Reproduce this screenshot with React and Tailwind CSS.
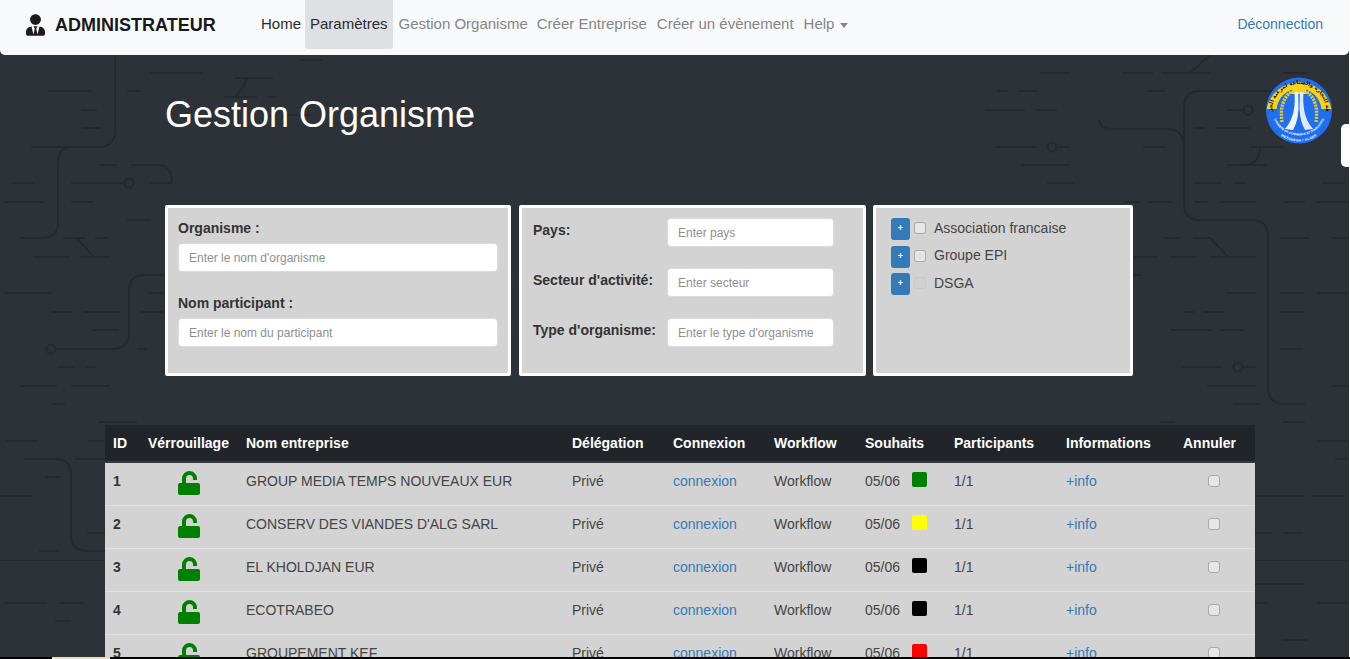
import { FaUserTie } from 'react-icons/fa'

const font = { fontFamily: '"Liberation Sans", Arial, sans-serif' }

// background circuit pattern: [x1, x2, y]
const traces = [
  [300, 323, 60], [150, 203, 73], [235, 273, 78], [48, 90, 91], [127, 140, 91], [224, 257, 97], [268, 276, 97],
  [81, 97, 110], [287, 310, 115], [82, 100, 128], [100, 117, 165], [131, 160, 165], [12, 34, 183], [71, 125, 183],
  [150, 172, 183], [5, 42, 202], [71, 93, 202], [127, 151, 220], [63, 85, 238], [95, 107, 238], [33, 69, 257],
  [80, 110, 257], [6, 50, 293], [150, 165, 293], [51, 72, 312], [83, 119, 312], [141, 165, 312], [93, 119, 330],
  [137, 147, 349], [57, 74, 367], [86, 96, 367], [21, 57, 386], [71, 110, 386], [52, 65, 404], [98, 137, 422],
  [6, 38, 441], [75, 105, 459], [45, 60, 477], [0, 32, 496], [87, 105, 533], [39, 59, 551], [6, 47, 603], [60, 82, 603],
  [55, 71, 621],
  [1040, 1070, 73], [1123, 1153, 73], [997, 1008, 91], [1018, 1038, 91], [1148, 1165, 91], [985, 1025, 110],
  [1036, 1057, 110], [996, 1036, 147], [1058, 1070, 147], [1143, 1166, 147], [1021, 1070, 165], [1047, 1074, 183],
  [1124, 1138, 202], [1149, 1172, 202],
  [1130, 1153, 73], [1161, 1210, 73], [1283, 1307, 73], [1227, 1245, 110], [1194, 1204, 128], [1217, 1250, 128],
  [1250, 1282, 147], [1227, 1267, 165], [1194, 1221, 183], [1234, 1246, 183], [1323, 1345, 183], [1194, 1208, 202],
  [1220, 1256, 202], [1286, 1305, 202], [1318, 1349, 202], [1164, 1180, 238], [1193, 1211, 238], [1280, 1309, 238],
  [1332, 1349, 238], [1133, 1157, 257], [1170, 1196, 257], [1210, 1256, 257], [1130, 1142, 275], [1226, 1256, 293],
  [1280, 1304, 293], [1317, 1349, 293], [1184, 1194, 312], [1203, 1224, 312], [1280, 1304, 312], [1170, 1211, 330],
  [1222, 1243, 330], [1280, 1303, 349], [1182, 1222, 367], [1243, 1256, 367], [1207, 1256, 386], [1332, 1349, 386],
  [1233, 1260, 404], [1160, 1175, 422], [1283, 1305, 422], [1317, 1349, 441], [1335, 1349, 459], [1255, 1304, 496],
  [1311, 1343, 496], [1255, 1272, 533], [1284, 1303, 533], [1255, 1305, 584], [1255, 1266, 603], [1317, 1349, 603],
  [1282, 1307, 640],
]

const curves = [
  'M115 55 V130 Q115 147 98 147 H31',
  'M72 147 Q58 147 58 163 V222 Q58 238 42 238 H21',
  'M160 165 Q172 167 172 183',
  'M247 78 Q243 90 235 97',
  'M76 238 L94 257',
  'M165 275 H145 Q129 275 129 291 V333 Q129 349 112 349 H56',
  'M88 441 H100 Q108 441 115 432',
  'M24 459 H55 Q71 459 71 475 V535 Q71 551 87 551 H105',
  'M1275 91 H1200 Q1184 91 1184 107 V204 Q1184 220 1200 220 H1252 Q1268 220 1268 236 V388 Q1268 404 1285 404 H1305',
  'M1099 120 Q1101 129 1110 129 H1170 Q1183 131 1184 145',
  'M1190 73 L1210 55',
  'M1260 147 Q1260 165 1243 165',
  'M1210 238 L1228 257',
]

const circles = [[129, 183], [51, 349], [1052, 147], [1248, 110], [1238, 367]]

const rows = [
  { id: 1, name: 'GROUP MEDIA TEMPS NOUVEAUX EUR', color: 'bg-[#008000]' },
  { id: 2, name: "CONSERV DES VIANDES D'ALG SARL", color: 'bg-[#ffff00]' },
  { id: 3, name: 'EL KHOLDJAN EUR', color: 'bg-black' },
  { id: 4, name: 'ECOTRABEO', color: 'bg-black' },
  { id: 5, name: 'GROUPEMENT KEF', color: 'bg-[#ff0000]' },
]

const organismes = [
  { name: 'Association francaise', disabled: false, row: 'mb-[6px]', text: 'leading-[20px]' },
  { name: 'Groupe EPI', disabled: false, row: 'mb-[5px]', text: 'leading-[18px]' },
  { name: 'DSGA', disabled: true, row: '', text: 'leading-[20px]' },
]

function Pattern() {
  return (
    <svg className="absolute left-0 top-0" width="1349" height="659" fill="none" stroke="#25292e" strokeWidth="2">
      {traces.map(([a, b, y], i) => (
        <line key={i} x1={a} x2={b} y1={y} y2={y} />
      ))}
      {curves.map((d) => (
        <path key={d} d={d} />
      ))}
      {circles.map(([x, y]) => (
        <circle key={x} cx={x} cy={y} r="4.5" />
      ))}
      <line x1="0" x2="1349" y1="560.5" y2="560.5" strokeWidth="1" />
    </svg>
  )
}

function Logo() {
  return (
    <svg className="absolute left-[1266px] top-[77px]" width="66" height="67" viewBox="0 0 66 67">
      <defs>
        <path id="ring-top" d="M6 34 A27 27 0 0 1 60 34" />
        <path id="ring-inner" d="M5.5 31 A27.5 27.5 0 0 0 60.5 31" />
        <path id="ring-outer" d="M1.5 33 A31.5 31.5 0 0 0 64.5 33" />
      </defs>
      <circle cx="33" cy="33.5" r="33" fill="#1f6ff0" />
      <path d="M0.6 32 A33 33 0 0 1 65.4 32 Z" fill="#fbd116" />
      <circle cx="33" cy="34" r="22.5" fill="#1f6ff0" />
      <path d="M26 11 H29 V10 H37 V11 H40 V14 L44 17 H22 L26 14 Z" fill="#fbd116" />
      <text fontSize="5.4" fontWeight="700" fill="#111" style={{ fontFamily: '"DejaVu Sans", sans-serif' }}>
        <textPath href="#ring-top" startOffset="50%" textAnchor="middle">غرفة التجارة والصناعة لمزغنة الجزائر</textPath>
      </text>
      <path d="M25 15 Q13 24 16 45" fill="none" stroke="#e6cb2e" strokeWidth="3.4" strokeDasharray="2 1.1" />
      <path d="M41 15 Q53 24 50 45" fill="none" stroke="#e6cb2e" strokeWidth="3.4" strokeDasharray="2 1.1" />
      <path d="M28.5 15 C29.5 28 28 42 19 52 L27 53 C30.5 47 32 40 32.5 32 L32.2 15 Z" fill="#eef4fb" />
      <path d="M37.5 15 C36.5 28 38 42 47 52 L39 53 C35.5 47 34 40 33.5 32 L33.8 15 Z" fill="#dfe9f7" />
      <text fontSize="3" fontWeight="700" fill="#fff" style={font}>
        <textPath href="#ring-inner" startOffset="50%" textAnchor="middle">CHAMBRE DE COMMERCE ET D'INDUSTRIE</textPath>
      </text>
      <text fontSize="3.4" fontWeight="700" fill="#fff" letterSpacing="0.3" style={font}>
        <textPath href="#ring-outer" startOffset="50%" textAnchor="middle">MEZGHENA / ALGER</textPath>
      </text>
    </svg>
  )
}

function NavLink({ children, active, muted, className }) {
  return (
    <a
      className={`flex h-[49px] items-center rounded-b-[3px] px-[5px] text-[15px] ${muted ? 'text-[#858688]' : 'text-[#292b2e]'} ${active ? 'bg-[#dfe0e2]' : ''} ${className || ''}`}
    >
      {children}
    </a>
  )
}

function Navbar() {
  return (
    <nav className="relative flex h-[55px] items-start rounded-b-[5px] bg-[#f8f9fa]">
      <div className="ml-[26px] flex h-[50px] w-[189px] items-center gap-[10px]">
        <FaUserTie className="h-[22px] w-[19px] shrink-0 text-[#1d1a1a]" />
        <span className="whitespace-nowrap text-[18px] font-bold text-[#16181b]">ADMINISTRATEUR</span>
      </div>
      <div className="ml-[41px] flex">
        <NavLink className="w-[49px]">Home</NavLink>
        <NavLink active>Paramètres</NavLink>
        <NavLink muted className="ml-px">Gestion Organisme</NavLink>
        <NavLink muted className="-ml-px">Créer Entreprise</NavLink>
        <NavLink muted>Créer un évènement</NavLink>
        <NavLink muted>
          Help
          <span className="ml-[6px] mt-[1px] border-x-[4px] border-t-[5px] border-x-transparent border-t-[#858688]" />
        </NavLink>
      </div>
      <a className="ml-auto mr-[26px] flex h-[49px] items-center text-[14px] text-[#337ab7]">Déconnection</a>
    </nav>
  )
}

function Field({ placeholder, className }) {
  return (
    <input
      placeholder={placeholder}
      className={`h-[29px] rounded-[4px] border border-[#dcdcdc] bg-white px-[10px] text-[12px] text-[#333] outline-none placeholder:text-[#8f8f8f] ${className}`}
    />
  )
}

function InlineField({ label, placeholder }) {
  return (
    <div className="flex h-[29px] items-start">
      <label className="w-[134px] pt-[3px] text-[14px] font-bold leading-[18px] text-[#333]">{label}</label>
      <Field placeholder={placeholder} className="w-[167px]" />
    </div>
  )
}

function Checkbox({ disabled, className }) {
  return (
    <input
      type="checkbox"
      disabled={disabled}
      className={`block h-3 w-3 appearance-none rounded-[3px] border ${disabled ? 'border-[#c8c8c8] bg-[#d0d0d0]' : 'border-[#a9a9a9] bg-[#e6e6e6]'} ${className || ''}`}
    />
  )
}

function Filters() {
  return (
    <section className="ml-[165px] mt-[70px] flex h-[171px]">
      <div className="w-[346px] rounded-[2px] border-[3px] border-white bg-[#d3d3d3] px-[10px] pt-[11px]">
        <label className="block text-[14px] font-bold leading-[18px] text-[#333]">Organisme :</label>
        <Field placeholder="Enter le nom d'organisme" className="mt-[6px] block w-[320px]" />
        <label className="mt-[22px] block text-[14px] font-bold leading-[18px] text-[#333]">Nom participant :</label>
        <Field placeholder="Enter le nom du participant" className="mt-[6px] block w-[320px]" />
      </div>
      <div className="ml-[8px] flex w-[347px] flex-col gap-[21px] rounded-[2px] border-[3px] border-white bg-[#d3d3d3] pl-[11px] pt-[10px]">
        <InlineField label="Pays:" placeholder="Enter pays" />
        <InlineField label="Secteur d'activité:" placeholder="Enter secteur" />
        <InlineField label="Type d'organisme:" placeholder="Enter le type d'organisme" />
      </div>
      <div className="ml-[7px] w-[260px] rounded-[2px] border-[3px] border-white bg-[#d3d3d3] pl-[15px] pt-[10px]">
        {organismes.map((o) => (
          <div key={o.name} className={`flex h-[22px] items-start ${o.row}`}>
            <button className="flex h-[22px] w-[19px] items-center justify-center rounded-[3px] bg-[#337ab7] pb-[1px] text-[9px] font-bold text-white">+</button>
            <Checkbox disabled={o.disabled} className="ml-[4px] mt-[4px]" />
            <span className={`ml-[8px] text-[14px] text-[#444] ${o.text}`}>{o.name}</span>
          </div>
        ))}
      </div>
    </section>
  )
}

function Lock() {
  return (
    <svg className="mx-auto" width="22" height="24" viewBox="0 0 22 24" fill="none">
      <path d="M6 13 V7.5 a5.5 5.5 0 0 1 11 0 V9" stroke="#008000" strokeWidth="4" />
      <rect x="0" y="12" width="22" height="12" rx="2" fill="#008000" />
    </svg>
  )
}

const headers = ['ID', 'Vérrouillage', 'Nom entreprise', 'Délégation', 'Connexion', 'Workflow', 'Souhaits', 'Participants', 'Informations', 'Annuler']

function EntreprisesTable() {
  return (
    <table className="ml-[105px] mt-[49px] w-[1150px] table-fixed border-collapse text-[14px] text-[#444]">
      <colgroup>
        <col className="w-[35px]" />
        <col className="w-[98px]" />
        <col className="w-[326px]" />
        <col className="w-[101px]" />
        <col className="w-[101px]" />
        <col className="w-[91px]" />
        <col className="w-[89px]" />
        <col className="w-[112px]" />
        <col className="w-[117px]" />
        <col className="w-[80px]" />
      </colgroup>
      <thead>
        <tr className="h-[37px] border-b-2 border-[#32383e] bg-[#212529] text-left font-bold text-white">
          {headers.map((h) => (
            <th key={h} className="whitespace-nowrap px-2 align-middle text-[14px] leading-[21px]">{h}</th>
          ))}
        </tr>
      </thead>
      <tbody>
        {rows.map((row) => (
          <tr key={row.id} className="h-[43px] border-b border-[#dee2e6] bg-[#d3d3d3] leading-[21px]">
            <td className="px-2 pt-2 align-top font-bold text-[#333]">{row.id}</td>
            <td className="px-2 pt-2 align-top"><Lock /></td>
            <td className="whitespace-nowrap px-2 pt-2 align-top">{row.name}</td>
            <td className="px-2 pt-2 align-top">Privé</td>
            <td className="px-2 pt-2 align-top text-[#337ab7]">connexion</td>
            <td className="px-2 pt-2 align-top">Workflow</td>
            <td className="px-2 pt-2 align-top">
              <div className="flex items-start">
                <span>05/06</span>
                <span className={`ml-[12px] mt-px h-[15px] w-[15px] rounded-[2px] ${row.color}`} />
              </div>
            </td>
            <td className="px-2 pt-2 align-top">1/1</td>
            <td className="px-2 pt-2 align-top text-[#337ab7]">+info</td>
            <td className="pl-2 pr-[10px] pt-[12px] align-top"><Checkbox className="mx-auto" /></td>
          </tr>
        ))}
      </tbody>
    </table>
  )
}

export default function App() {
  return (
    <div className="relative h-[659px] w-[1350px] overflow-hidden bg-white" style={font}>
      <div className="relative h-full w-[1349px] overflow-hidden bg-[#2d3138]">
        <Pattern />
        <div className="relative">
          <Navbar />
          <h1 className="ml-[165px] mt-[39px] text-[36px] font-normal leading-[41px] text-white">Gestion Organisme</h1>
          <Filters />
          <EntreprisesTable />
        </div>
        <Logo />
      </div>
      <div className="absolute left-[1341px] top-[124px] h-[43px] w-[9px] rounded-l-[5px] bg-white" />
      <div className="absolute bottom-0 left-0 flex h-[2px] w-full bg-black">
        <div className="ml-[52px] h-full w-[58px] bg-[#e8e0c0]" />
      </div>
    </div>
  )
}
